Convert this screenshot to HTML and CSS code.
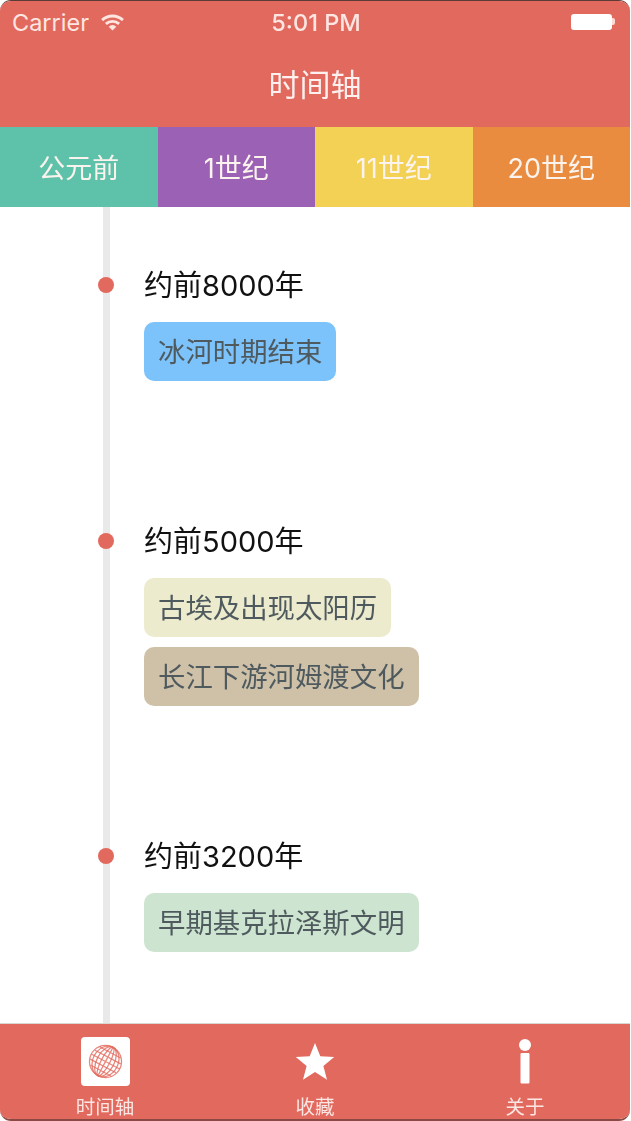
FILE: index.html
```html
<!DOCTYPE html>
<html lang="zh-CN">
<head>
<meta charset="utf-8">
<title>时间轴</title>
<link rel="stylesheet" href="styles.css">
</head>
<body>
<div class="phone">
  <header class="header">
    <div class="status">
      <div class="status-left">
        <span>Carrier</span>
        <svg class="wifi" viewBox="0 0 24 18" width="23" height="17"><path d="M1 6.500a16 16 0 0 1 22 0" /><path d="M5 10.500a10.500 10.500 0 0 1 14 0" /><path d="M12 17.500l-4-4a5.500 5.500 0 0 1 8 0z" class="wifi-fill"/></svg>
      </div>
      <div class="status-time">5:01 PM</div>
      <div class="status-right">
        <span class="battery"></span><span class="battery-nub"></span>
      </div>
    </div>
    <div class="nav-title">时间轴</div>
  </header>
  <nav class="eras">
    <div class="era era-teal">公元前</div>
    <div class="era era-purple">1世纪</div>
    <div class="era era-yellow">11世纪</div>
    <div class="era era-orange">20世纪</div>
  </nav>
  <main class="timeline">
    <section class="entry entry-first">
      <h2 class="entry-title">约前8000年</h2>
      <div class="tags"><span class="tag tag-blue">冰河时期结束</span></div>
    </section>
    <section class="entry entry-second">
      <h2 class="entry-title">约前5000年</h2>
      <div class="tags">
        <span class="tag tag-cream">古埃及出现太阳历</span>
        <span class="tag tag-tan">长江下游河姆渡文化</span>
      </div>
    </section>
    <section class="entry">
      <h2 class="entry-title">约前3200年</h2>
      <div class="tags"><span class="tag tag-green">早期基克拉泽斯文明</span></div>
    </section>
  </main>
  <footer class="tabbar">
    <div class="tab">
      <div class="tab-icon">
        <span class="globe-box">
          <svg viewBox="0 0 36 36" width="35" height="35" class="globe">
            <circle cx="18" cy="18" r="16.500"/>
            <g transform="rotate(28 18 18)">
              <ellipse cx="18" cy="18" rx="4.500" ry="16.500"/>
              <ellipse cx="18" cy="18" rx="9" ry="16.500"/>
              <ellipse cx="18" cy="18" rx="13" ry="16.500"/>
              <path d="M18 1.500v33M6 7.500h24M3 12.800h30M1.500 18h33M3 23.200h30M6 28.500h24"/>
            </g>
          </svg>
        </span>
      </div>
      <div class="tab-label">时间轴</div>
    </div>
    <div class="tab">
      <div class="tab-icon">
        <svg viewBox="0 0 40 40" width="40" height="40"><path class="solid" d="M20 1l5.300 13.200 13.900.8-10.800 8.900 3.600 13.800L20 30l-12 7.700 3.600-13.800L.8 15l13.900-.8z"/></svg>
      </div>
      <div class="tab-label">收藏</div>
    </div>
    <div class="tab">
      <div class="tab-icon">
        <svg viewBox="0 0 14 46" width="14" height="46"><circle class="solid" cx="7" cy="6" r="6"/><rect class="solid" x="2.500" y="14" width="9" height="30.500" rx="1"/></svg>
      </div>
      <div class="tab-label">关于</div>
    </div>
  </footer>
</div>
</body>
</html>
```
FILE: styles.css
```css
* { box-sizing: border-box; }
html, body { margin: 0; padding: 0; background: #fff; }
body {
  font-family: Inter, "Noto Sans CJK SC", sans-serif;
}
.phone {
  width: 630px;
  height: 1121px;
  display: flex;
  flex-direction: column;
  overflow: hidden;
  border-radius: 11px;
  border-top: 1px solid #5c3a36;
  border-bottom: 2px solid #8a4a43;
  background: #fff;
  filter: blur(0.6px);
}
.header {
  background: #e2695d;
  color: #fff;
  height: 126px;
  flex: none;
}
.status {
  height: 41px;
  display: grid;
  grid-template-columns: 1fr auto 1fr;
  align-items: center;
  padding: 2px 15px 0 12px;
  font-size: 23.500px;
  color: #fde6e2;
}
.status-left { display: flex; align-items: center; gap: 12px; }
.status-time { padding-left: 5px; font-weight: 500; }
.status-right { display: flex; align-items: center; justify-content: flex-end; margin-bottom: 2px; }
.wifi { margin-bottom: 1px; }
.wifi path { fill: none; stroke: #fde6e2; stroke-width: 3; }
.wifi .wifi-fill { fill: #fde6e2; stroke: none; }
.battery { width: 41px; height: 16px; background: #fff; border-radius: 3px; }
.battery-nub { width: 3px; height: 7px; background: #fbd9d4; border-radius: 0 2px 2px 0; }
.nav-title {
  height: 85px;
  display: flex;
  align-items: center;
  justify-content: center;
  font-size: 31px;
  font-weight: 400;
  padding-bottom: 5px;
  color: #fdf0ee;
}
.eras {
  display: grid;
  grid-template-columns: repeat(4, 1fr);
  height: 80px;
  flex: none;
}
.era {
  display: flex;
  align-items: center;
  justify-content: center;
  font-size: 27px;
  font-weight: 400;
  padding-bottom: 2px;
  color: #fbf3ee;
}
.era-teal { background: #5dc2a9; }
.era-purple { background: #9b61b5; }
.era-yellow { background: #f2d154; }
.era-orange { background: #e98c3f; }
.timeline {
  flex: 1;
  position: relative;
  padding: 58px 0 0 144px;
  overflow: hidden;
}
.timeline::before {
  content: "";
  position: absolute;
  left: 103px;
  top: 0;
  bottom: 0;
  width: 7px;
  background: #e9e9e9;
}
.entry { position: relative; padding-bottom: 130px; }
.entry-first { padding-bottom: 140px; }
.entry-title {
  margin: 0 0 17px;
  height: 40px;
  line-height: 42px;
  font-size: 29px;
  font-weight: 400;
  color: #111;
}
.entry-title::before {
  content: "";
  position: absolute;
  left: -46px;
  top: 12px;
  width: 16px;
  height: 16px;
  border-radius: 50%;
  background: #e2695d;
}
.tags { display: flex; flex-direction: column; align-items: flex-start; gap: 10px; }
.tag {
  height: 59px;
  line-height: 61px;
  padding: 0 14px;
  border-radius: 10px;
  font-size: 27.400px;
  color: #4f5a5f;
}
.tag-blue { background: #7dc3fb; }
.tag-cream { background: #ecebcd; }
.tag-tan { background: #cfc1a8; }
.tag-green { background: #cde5d0; }
.tabbar {
  height: 96px;
  flex: none;
  background: #e2695d;
  border-top: 1px solid #d8d8d0;
  display: grid;
  grid-template-columns: repeat(3, 1fr);
}
.tab {
  display: flex;
  flex-direction: column;
  align-items: center;
  padding-top: 13px;
}
.tab-icon { height: 49px; display: flex; align-items: center; justify-content: center; }
.tab-label {
  margin-top: 10px;
  font-size: 19.500px;
  line-height: 22px;
  font-weight: 400;
  color: #fbe6e3;
}
.globe-box {
  width: 49px;
  height: 49px;
  background: #fff;
  border-radius: 4px;
  display: flex;
  align-items: center;
  justify-content: center;
}
.globe circle, .globe ellipse, .globe path { fill: none; stroke: #e2695d; stroke-width: 1.300; stroke-opacity: .8; }
.solid { fill: #fff; }
```
